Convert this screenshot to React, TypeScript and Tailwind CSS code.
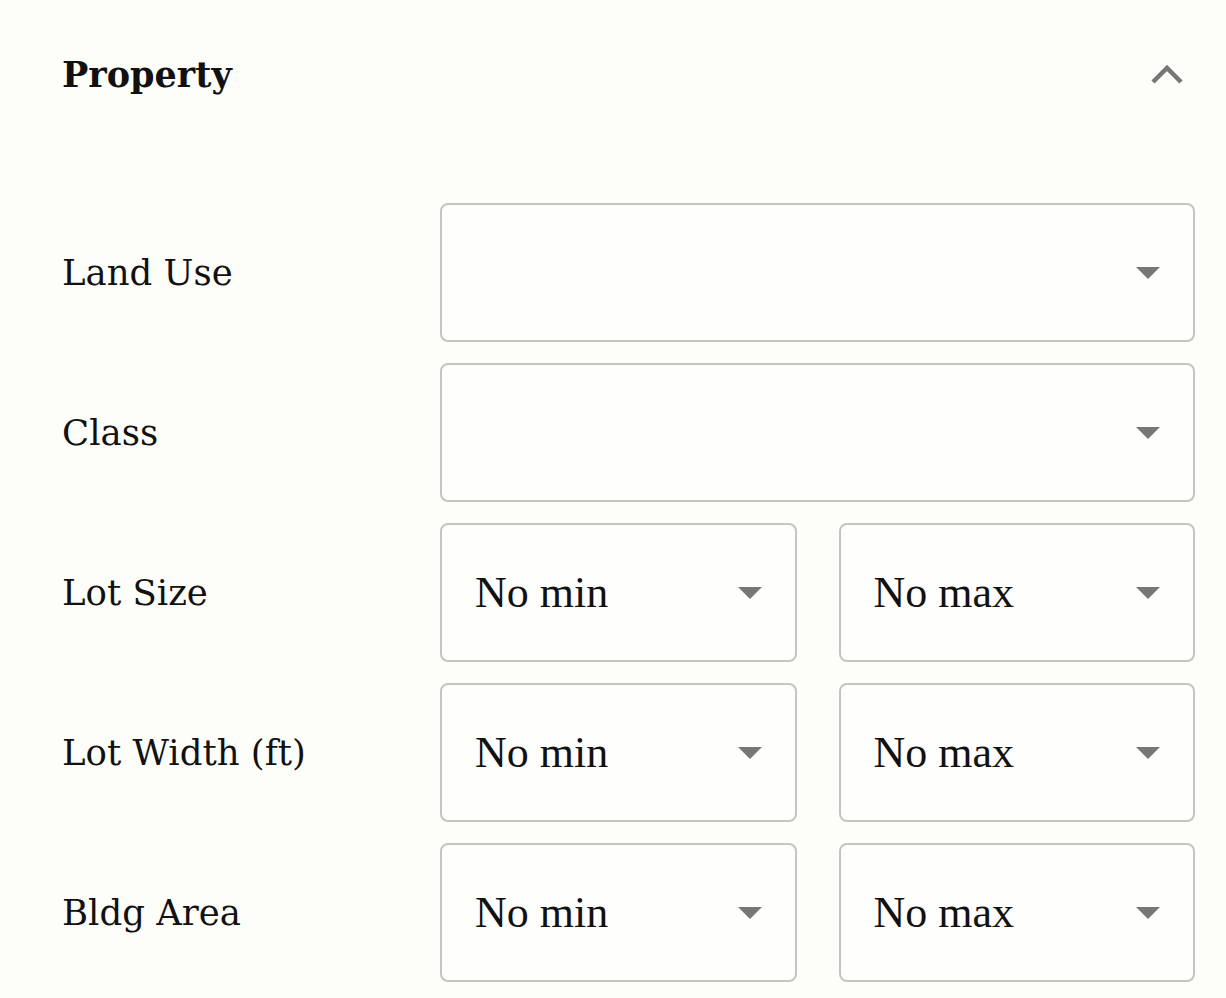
import React from 'react';

const labelFont = { fontFamily: '"DejaVu Serif", "Liberation Serif", serif' };

function Caret() {
  return (
    <svg width="24" height="12" viewBox="0 0 24 12" className="shrink-0">
      <polygon points="0,0 24,0 12,12" fill="#777775" />
    </svg>
  );
}

function SelectBox({ value }: { value?: string }) {
  return (
    <div className="h-[139px] flex-1 flex items-center justify-between border-2 border-[#c4c4c1] rounded-[8px] pl-[33px] pr-[33px] bg-[#fefefc]">
      <span className="text-[44px] text-[#111] font-['Liberation_Serif',serif] leading-none">
        {value ?? ''}
      </span>
      <Caret />
    </div>
  );
}

const rows: { label: string; split: boolean }[] = [
  { label: 'Land Use', split: false },
  { label: 'Class', split: false },
  { label: 'Lot Size', split: true },
  { label: 'Lot Width (ft)', split: true },
  { label: 'Bldg Area', split: true },
];

export default function App() {
  return (
    <div className="min-h-screen w-[1226px] bg-[#fdfdfa] pl-[62px] pr-[31px]">
      {/* Header */}
      <div className="h-[150px] flex items-center justify-between">
        <h2 className="text-[35px] font-bold text-[#111]" style={labelFont}>
          Property
        </h2>
        <svg width="34" height="22" viewBox="0 0 34 22" className="mr-[11px]">
          <polyline
            points="3,18 17,4 31,18"
            fill="none"
            stroke="#777775"
            strokeWidth="4.5"
          />
        </svg>
      </div>

      {/* Fields */}
      <div className="mt-[53px] flex flex-col gap-[21px]">
        {rows.map(r => (
          <div key={r.label} className="flex items-center">
            <div className="w-[378px] text-[35.5px] text-[#111]" style={labelFont}>
              {r.label}
            </div>
            {r.split ? (
              <div className="flex-1 flex gap-[42px]">
                <SelectBox value="No min" />
                <SelectBox value="No max" />
              </div>
            ) : (
              <SelectBox />
            )}
          </div>
        ))}
      </div>
    </div>
  );
}
